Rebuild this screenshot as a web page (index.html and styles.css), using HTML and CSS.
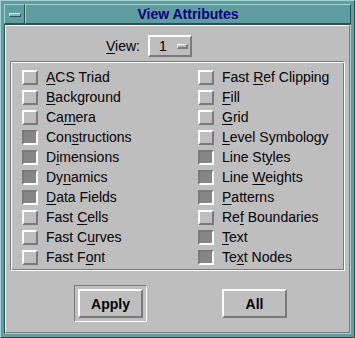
FILE: index.html
```html
<!DOCTYPE html>
<html lang="en">
<head>
  <meta charset="UTF-8" />
  <meta name="viewport" content="width=device-width, initial-scale=1.0"/>
  <title>View Attributes</title>
  <link rel="stylesheet" href="styles.css">
</head>
<body>
  <div class="window">
    <div class="titlebar">
      <div class="menu-btn"><span class="menu-bar"></span></div>
      <div class="title">View Attributes</div>
    </div>
    <div class="client">
      <div class="dialog">
        <div class="view-row">
          <span class="view-label"><u>V</u>iew:</span>
          <div class="option">
            <span class="option-value">1</span>
            <span class="indicator"></span>
          </div>
        </div>

        <div class="frame">
          <div class="toggles">
            <div class="toggle"><span class="box"></span><span><u>A</u>CS Triad</span></div>
            <div class="toggle"><span class="box"></span><span><u>B</u>ackground</span></div>
            <div class="toggle"><span class="box"></span><span>Ca<u>m</u>era</span></div>
            <div class="toggle"><span class="box on"></span><span>Con<u>s</u>tructions</span></div>
            <div class="toggle"><span class="box on"></span><span>D<u>i</u>mensions</span></div>
            <div class="toggle"><span class="box on"></span><span>Dy<u>n</u>amics</span></div>
            <div class="toggle"><span class="box on"></span><span><u>D</u>ata Fields</span></div>
            <div class="toggle"><span class="box"></span><span>Fast <u>C</u>ells</span></div>
            <div class="toggle"><span class="box"></span><span>Fast C<u>u</u>rves</span></div>
            <div class="toggle"><span class="box"></span><span>Fast F<u>o</u>nt</span></div>

            <div class="toggle"><span class="box"></span><span>Fast <u>R</u>ef Clipping</span></div>
            <div class="toggle"><span class="box"></span><span><u>F</u>ill</span></div>
            <div class="toggle"><span class="box"></span><span><u>G</u>rid</span></div>
            <div class="toggle"><span class="box"></span><span><u>L</u>evel Symbology</span></div>
            <div class="toggle"><span class="box on"></span><span>Line St<u>y</u>les</span></div>
            <div class="toggle"><span class="box on"></span><span>Line <u>W</u>eights</span></div>
            <div class="toggle"><span class="box on"></span><span><u>P</u>atterns</span></div>
            <div class="toggle"><span class="box"></span><span>Re<u>f</u> Boundaries</span></div>
            <div class="toggle"><span class="box on"></span><span><u>T</u>ext</span></div>
            <div class="toggle"><span class="box on"></span><span>Te<u>x</u>t Nodes</span></div>
          </div>
        </div>

        <div class="buttons">
          <div class="default-ring"><button class="btn">Apply</button></div>
          <button class="btn btn-all">All</button>
        </div>
      </div>
    </div>
  </div>
</body>
</html>
```

FILE: styles.css
```css
body {
  margin: 0;
  background: #5f9ea0;
  font-family: "Liberation Sans", Arial, sans-serif;
  font-size: 14px;
  color: #000;
}
u {
  text-decoration: underline;
  text-underline-offset: 2px;
}
.window {
  width: 355px;
  height: 338px;
  box-sizing: border-box;
  padding: 3px;
  background: #5f9ea0;
  border: 1px solid;
  border-color: #a3d0d1 #2f4f4f #2f4f4f #a3d0d1;
  display: flex;
  flex-direction: column;
}
.titlebar {
  display: flex;
  height: 20px;
}
.menu-btn, .title {
  box-sizing: border-box;
  border: 1px solid;
  border-color: #a3d0d1 #2f4f4f #2f4f4f #a3d0d1;
}
.menu-btn {
  width: 21px;
  padding: 8px 0 0 4px;
}
.menu-bar {
  display: block;
  width: 12px;
  height: 4px;
  box-sizing: border-box;
  border: 1px solid;
  border-color: #d0ecec #2f4f4f #2f4f4f #d0ecec;
  background: #7fb6b8;
}
.title {
  flex: 1;
  text-align: center;
  line-height: 18px;
  font-weight: bold;
  color: #000080;
}
.client {
  flex: 1;
  border: 1px solid;
  border-color: #2f4f4f #a3d0d1 #a3d0d1 #2f4f4f;
  display: flex;
}
.dialog {
  flex: 1;
  background: #bebebe;
  border: 1px solid;
  border-color: #fff #7a7a7a #7a7a7a #fff;
}
.view-row {
  display: flex;
  align-items: center;
  height: 22px;
  margin: 9px 0 4px 100px;
  gap: 8px;
}
.option {
  display: flex;
  align-items: center;
  width: 44px;
  height: 22px;
  box-sizing: border-box;
  border: 2px solid;
  border-color: #fff #7a7a7a #7a7a7a #fff;
  padding-left: 9px;
}
.option-value {
  width: 18px;
}
.indicator {
  width: 11px;
  height: 5px;
  box-sizing: border-box;
  border: 1px solid;
  border-color: #fff #7a7a7a #7a7a7a #fff;
  border-width: 1px 2px 2px 1px;
}
.frame {
  margin: 0 4px;
  height: 210px;
  box-sizing: border-box;
  border: 1px solid;
  border-color: #7a7a7a #fff #fff #7a7a7a;
  box-shadow: inset 1px 1px 0 #fff, inset -1px -1px 0 #7a7a7a;
  padding: 5px 0 0 11px;
}
.toggles {
  display: grid;
  grid-template-columns: 176px 1fr;
  grid-template-rows: repeat(10, 20px);
  grid-auto-flow: column;
}
.toggle {
  display: flex;
  align-items: center;
  line-height: 20px;
  white-space: nowrap;
}
.box {
  width: 16px;
  height: 15px;
  box-sizing: border-box;
  border: 2px solid;
  border-color: #fff #7a7a7a #7a7a7a #fff;
  margin-right: 8px;
}
.box.on {
  background: #868686;
  border-color: #7a7a7a #fff #fff #7a7a7a;
}
.buttons {
  display: flex;
  align-items: center;
  margin: 14px 0 0 68px;
  gap: 75px;
}
.default-ring {
  padding: 3px;
  border: 1px solid;
  border-color: #7a7a7a #fff #fff #7a7a7a;
  display: flex;
}
.btn {
  width: 65px;
  height: 29px;
  box-sizing: border-box;
  margin: 0;
  padding: 0;
  background: #bebebe;
  border: 2px solid;
  border-color: #fff #7a7a7a #7a7a7a #fff;
  font-family: "Liberation Sans", Arial, sans-serif;
  font-size: 14px;
  font-weight: bold;
  color: #000;
}
```
